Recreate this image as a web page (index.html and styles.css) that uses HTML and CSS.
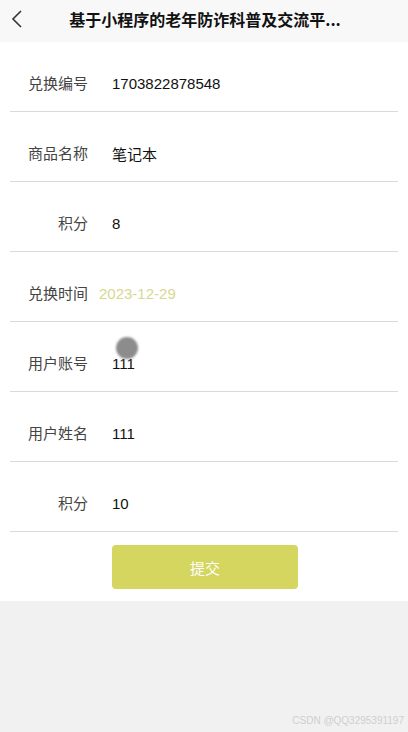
FILE: index.html
```html
<!DOCTYPE html>
<html>
<head>
<meta charset="utf-8">
<link rel="stylesheet" href="styles.css">
</head>
<body>
<div class="page">
  <header class="nav">
    <svg class="back" width="14" height="20" viewBox="0 0 14 20"><path d="M11 2 L3 10 L11 18" fill="none" stroke="#333" stroke-width="1.6"/></svg>
    <div class="title">基于小程序的老年防诈科普及交流平...</div>
  </header>
  <main class="content">
    <div class="row"><span class="label">兑换编号</span><span class="value">1703822878548</span></div>
    <div class="row"><span class="label">商品名称</span><span class="value">笔记本</span></div>
    <div class="row"><span class="label">积分</span><span class="value">8</span></div>
    <div class="row"><span class="label">兑换时间</span><span class="value date">2023-12-29</span></div>
    <div class="row"><span class="label">用户账号</span><span class="value">111</span></div>
    <div class="row"><span class="label">用户姓名</span><span class="value">111</span></div>
    <div class="row"><span class="label">积分</span><span class="value">10</span></div>
    <div class="actions"><button class="submit">提交</button></div>
  </main>
  <div class="touch"></div>
  <div class="mark">CSDN @QQ3295391197</div>
</div>
</body>
</html>
```
FILE: styles.css
```css
html, body {
  margin: 0;
  padding: 0;
}
body {
  background: #f1f1f1;
  font-family: "Liberation Sans", Arial, "Noto Sans CJK SC", sans-serif;
}
.page {
  position: relative;
  width: 408px;
  height: 732px;
  overflow: hidden;
}
.nav {
  height: 42px;
  background: #f8f8f8;
  display: flex;
  align-items: center;
  justify-content: center;
  position: relative;
}
.back {
  position: absolute;
  left: 10px;
  top: 9px;
}
.title {
  font-size: 16px;
  font-weight: bold;
  color: #111;
  white-space: nowrap;
  font-family: "Noto Sans CJK SC", sans-serif;
  margin-left: 2px;
  margin-top: -4px;
}
.content {
  background: #fff;
  padding-bottom: 12px;
}
.row {
  height: 57px;
  padding-top: 12px;
  margin: 0 10px;
  border-bottom: 1px solid #d9d9d9;
  display: flex;
  align-items: center;
  font-size: 15px;
}
.label {
  width: 78px;
  text-align: right;
  color: #444;
  font-family: "Noto Sans CJK SC", sans-serif;
  font-size: 15px;
}
.value {
  margin-left: 24px;
  color: #111;
  padding-top: 2px;
}
.value.date {
  margin-left: 11px;
  color: #d7d88e;
}
.actions {
  padding: 13px 0 0 112px;
}
.submit {
  width: 186px;
  height: 44px;
  border: none;
  border-radius: 4px;
  background: #d4d660;
  color: #fff;
  font-size: 15px;
  font-family: "Noto Sans CJK SC", sans-serif;
  padding: 0;
}
.touch {
  position: absolute;
  left: 116px;
  top: 337px;
  width: 22px;
  height: 22px;
  border-radius: 50%;
  background: #8c8c8c;
  filter: blur(0.8px);
}
.mark {
  position: absolute;
  right: 4px;
  bottom: 6px;
  font-size: 10px;
  color: #cfcfcf;
}
```
